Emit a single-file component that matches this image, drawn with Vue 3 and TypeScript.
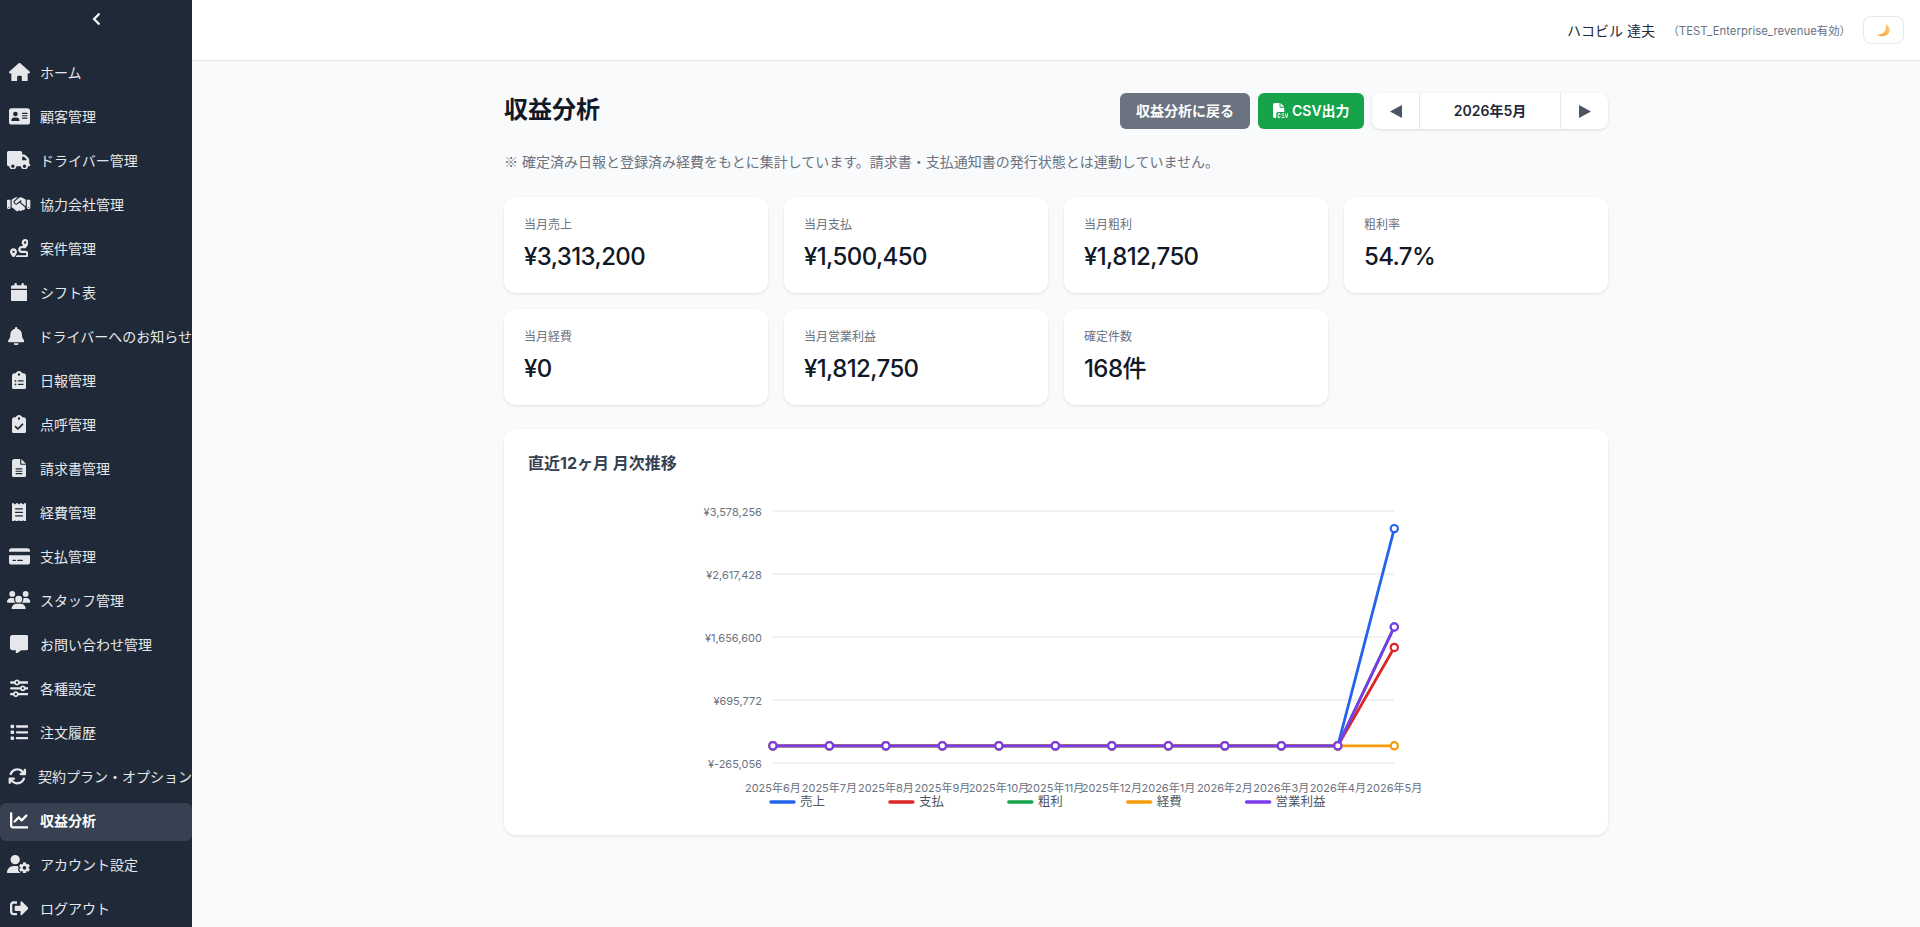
<script setup lang="ts">
import { computed } from 'vue'

interface NavItem {
  label: string
  w: number
  d: string
  active?: boolean
  tight?: boolean
}

const navItems: NavItem[] = [
  { label: 'ホーム', w: 576, d: 'M575.8 255.5c0 18-15 32.1-32 32.1h-32l.7 160.2c0 2.7-.2 5.4-.5 8.1V472c0 22.1-17.9 40-40 40H456c-1.1 0-2.2 0-3.3-.1c-1.4 .1-2.8 .1-4.2 .1H416 392c-22.1 0-40-17.9-40-40V448 384c0-17.7-14.3-32-32-32H256c-17.7 0-32 14.3-32 32v64 24c0 22.1-17.9 40-40 40H160 128.1c-1.5 0-3-.1-4.5-.2c-1.2 .1-2.4 .2-3.6 .2H104c-22.1 0-40-17.9-40-40V360c0-.9 0-1.9 .1-2.8V287.6H32c-18 0-32-14-32-32.1c0-9 3-17 10-24L266.4 8c7-7 15-8 22-8s15 2 21 7L564.8 231.5c8 7 12 15 11 24z' },
  { label: '顧客管理', w: 576, d: 'M64 32C28.7 32 0 60.7 0 96V416c0 35.3 28.7 64 64 64H512c35.3 0 64-28.7 64-64V96c0-35.3-28.7-64-64-64H64zm80 256h64c44.2 0 80 35.8 80 80c0 8.8-7.2 16-16 16H80c-8.8 0-16-7.2-16-16c0-44.2 35.8-80 80-80zm-32-96a64 64 0 1 1 128 0 64 64 0 1 1 -128 0zm256-32H496c8.8 0 16 7.2 16 16s-7.2 16-16 16H368c-8.8 0-16-7.2-16-16s7.2-16 16-16zm0 64H496c8.8 0 16 7.2 16 16s-7.2 16-16 16H368c-8.8 0-16-7.2-16-16s7.2-16 16-16zm0 64H496c8.8 0 16 7.2 16 16s-7.2 16-16 16H368c-8.8 0-16-7.2-16-16s7.2-16 16-16z' },
  { label: 'ドライバー管理', w: 640, d: 'M48 0C21.5 0 0 21.5 0 48V368c0 26.5 21.5 48 48 48H64c0 53 43 96 96 96s96-43 96-96H384c0 53 43 96 96 96s96-43 96-96h32c17.7 0 32-14.3 32-32s-14.3-32-32-32V288 256 237.3c0-17-6.7-33.3-18.7-45.3L512 114.7c-12-12-28.3-18.7-45.3-18.7H416V48c0-26.5-21.5-48-48-48H48zM416 160h50.7L544 237.3V256H416V160zM112 416a48 48 0 1 1 96 0 48 48 0 1 1 -96 0zm368-48a48 48 0 1 1 0 96 48 48 0 1 1 0-96z' },
  { label: '協力会社管理', w: 640, d: 'M323.4 85.2l-96.8 78.4c-16.1 13-19.2 36.4-7 53.1c12.9 17.8 38 21.3 55.3 7.8l99.3-77.2c7-5.4 17-4.2 22.5 2.8s4.2 17-2.8 22.5l-20.9 16.2L512 316.8V128h-.7l-3.9-2.5L434.8 79c-15.3-9.8-33.2-15-51.4-15c-21.8 0-43 7.5-60 21.2zm22.8 124.4l-51.7 40.2C263 274.4 217.3 268 193.7 235.6c-22.2-30.5-16.6-73.1 12.7-96.8l83.2-67.3c-11.6-4.9-24.1-7.4-36.8-7.4C234 64 215.7 69.6 200 80l-72 48V352h28.2l91.4 83.4c19.6 17.9 49.9 16.5 67.8-3.1c5.5-6.1 9.2-13.2 11.1-20.6l17 15.6c19.5 17.9 49.9 16.6 67.8-2.9c4.5-4.9 7.8-10.6 9.9-16.5c19.4 13 45.8 10.3 62.1-7.5c17.9-19.5 16.6-49.9-2.9-67.8l-134.2-123zM16 128c-8.8 0-16 7.2-16 16V352c0 17.7 14.3 32 32 32H64c17.7 0 32-14.3 32-32V128H16zM48 320a16 16 0 1 1 0 32 16 16 0 1 1 0-32zM544 128V352c0 17.7 14.3 32 32 32h32c17.7 0 32-14.3 32-32V144c0-8.8-7.2-16-16-16H544zm32 208a16 16 0 1 1 32 0 16 16 0 1 1 -32 0z' },
  { label: '案件管理', w: 512, d: 'M512 96c0 50.2-59.1 125.1-84.6 155c-3.8 4.4-9.4 6.1-14.5 5H320c-17.7 0-32 14.3-32 32s14.3 32 32 32h96c53 0 96 43 96 96s-43 96-96 96H139.6c8.7-9.9 19.3-22.6 30-36.8c6.3-8.4 12.8-17.6 19-27.2H416c17.7 0 32-14.3 32-32s-14.3-32-32-32H320c-53 0-96-43-96-96s43-96 96-96h39.8c-21-31.5-39.8-67.7-39.8-96c0-53 43-96 96-96s96 43 96 96zM117.1 489.1c-3.8 4.3-7.2 8.1-10.1 11.3l-1.8 2-.2-.2c-6 4.6-14.6 4-20-1.8C59.8 473 0 402.5 0 352c0-53 43-96 96-96s96 43 96 96c0 30-21.1 67-43.5 97.9c-10.7 14.7-21.7 28-30.8 38.5l-.6 .7zM128 352a32 32 0 1 0 -64 0 32 32 0 1 0 64 0zM416 128a32 32 0 1 0 0-64 32 32 0 1 0 0 64z' },
  { label: 'シフト表', w: 448, d: 'M96 32V64H48C21.5 64 0 85.5 0 112v48H448V112c0-26.5-21.5-48-48-48H352V32c0-17.7-14.3-32-32-32s-32 14.3-32 32V64H160V32c0-17.7-14.3-32-32-32S96 14.3 96 32zM448 192H0V464c0 26.5 21.5 48 48 48H400c26.5 0 48-21.5 48-48V192z' },
  { label: 'ドライバーへのお知らせ', w: 448, tight: true, d: 'M224 0c-17.7 0-32 14.3-32 32V51.2C119 66 64 130.6 64 208v18.8c0 47-17.3 92.4-48.5 127.6l-7.4 8.3c-8.4 9.4-10.4 22.9-5.3 34.4S19.4 416 32 416H416c12.6 0 24-7.4 29.2-18.9s3.1-25-5.3-34.4l-7.4-8.3C401.3 319.2 384 273.9 384 226.8V208c0-77.4-55-142-128-156.8V32c0-17.7-14.3-32-32-32zm45.3 493.3c12-12 18.7-28.3 18.7-45.3H224 160c0 17 6.7 33.3 18.7 45.3s28.3 18.7 45.3 18.7s33.3-6.7 45.3-18.7z' },
  { label: '日報管理', w: 384, d: 'M192 0c-41.8 0-77.4 26.7-90.5 64H64C28.7 64 0 92.7 0 128V448c0 35.3 28.7 64 64 64H320c35.3 0 64-28.7 64-64V128c0-35.3-28.7-64-64-64H282.5C269.4 26.7 233.8 0 192 0zm0 64a32 32 0 1 1 0 64 32 32 0 1 1 0-64zM72 272a24 24 0 1 1 48 0 24 24 0 1 1 -48 0zm104-16H304c8.8 0 16 7.2 16 16s-7.2 16-16 16H176c-8.8 0-16-7.2-16-16s7.2-16 16-16zM72 368a24 24 0 1 1 48 0 24 24 0 1 1 -48 0zm88 0c0-8.8 7.2-16 16-16H304c8.8 0 16 7.2 16 16s-7.2 16-16 16H176c-8.8 0-16-7.2-16-16z' },
  { label: '点呼管理', w: 384, d: 'M192 0c-41.8 0-77.4 26.7-90.5 64H64C28.7 64 0 92.7 0 128V448c0 35.3 28.7 64 64 64H320c35.3 0 64-28.7 64-64V128c0-35.3-28.7-64-64-64H282.5C269.4 26.7 233.8 0 192 0zm0 64a32 32 0 1 1 0 64 32 32 0 1 1 0-64zM305 273L177 401c-9.4 9.4-24.6 9.4-33.9 0L79 337c-9.4-9.4-9.4-24.6 0-33.9s24.6-9.4 33.9 0l47 47L271 239c9.4-9.4 24.6-9.4 33.9 0s9.4 24.6 0 33.9z' },
  { label: '請求書管理', w: 384, d: 'M64 0C28.7 0 0 28.7 0 64V448c0 35.3 28.7 64 64 64H320c35.3 0 64-28.7 64-64V160H256c-17.7 0-32-14.3-32-32V0H64zM256 0V128H384L256 0zM112 256H272c8.8 0 16 7.2 16 16s-7.2 16-16 16H112c-8.8 0-16-7.2-16-16s7.2-16 16-16zm0 64H272c8.8 0 16 7.2 16 16s-7.2 16-16 16H112c-8.8 0-16-7.2-16-16s7.2-16 16-16zm0 64H272c8.8 0 16 7.2 16 16s-7.2 16-16 16H112c-8.8 0-16-7.2-16-16s7.2-16 16-16z' },
  { label: '経費管理', w: 384, d: 'M14 2.2C22.5-1.7 32.5-.3 39.6 5.8L80 40.4 120.4 5.8c9-7.7 22.3-7.7 31.2 0L192 40.4 232.4 5.8c9-7.7 22.3-7.7 31.2 0L304 40.4 344.4 5.8c7.1-6.1 17.1-7.5 25.6-3.6s14 12.4 14 21.8V488c0 9.4-5.5 17.9-14 21.8s-18.5 2.5-25.6-3.6L304 471.6l-40.4 34.6c-9 7.7-22.3 7.7-31.2 0L192 471.6l-40.4 34.6c-9 7.7-22.3 7.7-31.2 0L80 471.6 39.6 506.2c-7.1 6.1-17.1 7.5-25.6 3.6S0 497.4 0 488V24C0 14.6 5.5 6.1 14 2.2zM96 144c-8.8 0-16 7.2-16 16s7.2 16 16 16H288c8.8 0 16-7.2 16-16s-7.2-16-16-16H96zM80 352c0 8.8 7.2 16 16 16H288c8.8 0 16-7.2 16-16s-7.2-16-16-16H96c-8.8 0-16 7.2-16 16zM96 240c-8.8 0-16 7.2-16 16s7.2 16 16 16H288c8.8 0 16-7.2 16-16s-7.2-16-16-16H96z' },
  { label: '支払管理', w: 576, d: 'M64 32C28.7 32 0 60.7 0 96v32H576V96c0-35.3-28.7-64-64-64H64zM576 224H0V416c0 35.3 28.7 64 64 64H512c35.3 0 64-28.7 64-64V224zM112 352h64c8.8 0 16 7.2 16 16s-7.2 16-16 16H112c-8.8 0-16-7.2-16-16s7.2-16 16-16zm112 16c0-8.8 7.2-16 16-16H368c8.8 0 16 7.2 16 16s-7.2 16-16 16H240c-8.8 0-16-7.2-16-16z' },
  { label: 'スタッフ管理', w: 640, d: 'M144 0a80 80 0 1 1 0 160A80 80 0 1 1 144 0zM512 0a80 80 0 1 1 0 160A80 80 0 1 1 512 0zM0 298.7C0 239.8 47.8 192 106.7 192h42.7c15.9 0 31 3.5 44.6 9.7c-1.3 7.2-1.9 14.7-1.9 22.3c0 38.2 16.8 72.5 43.3 96c-.2 0-.4 0-.7 0H21.3C9.6 320 0 310.4 0 298.7zM405.3 320c-.2 0-.4 0-.7 0c26.6-23.5 43.3-57.8 43.3-96c0-7.6-.7-15-1.9-22.3c13.6-6.3 28.7-9.7 44.6-9.7h42.7C592.2 192 640 239.8 640 298.7c0 11.8-9.6 21.3-21.3 21.3H405.3zM224 224a96 96 0 1 1 192 0 96 96 0 1 1 -192 0zM128 485.3C128 411.7 187.7 352 261.3 352H378.7C452.3 352 512 411.7 512 485.3c0 14.7-11.9 26.7-26.7 26.7H154.7c-14.7 0-26.7-11.9-26.7-26.7z' },
  { label: 'お問い合わせ管理', w: 512, d: 'M64 0C28.7 0 0 28.7 0 64V352c0 35.3 28.7 64 64 64h96v80c0 6.1 3.4 11.6 8.8 14.3s11.9 2.1 16.8-1.5L309.3 416H448c35.3 0 64-28.7 64-64V64c0-35.3-28.7-64-64-64H64z' },
  { label: '各種設定', w: 512, d: 'M0 416c0 17.7 14.3 32 32 32l54.7 0c12.3 28.3 40.5 48 73.3 48s61-19.7 73.3-48L480 448c17.7 0 32-14.3 32-32s-14.3-32-32-32l-246.7 0c-12.3-28.3-40.5-48-73.3-48s-61 19.7-73.3 48L32 384c-17.7 0-32 14.3-32 32zm128 0a32 32 0 1 1 64 0 32 32 0 1 1 -64 0zM320 256a32 32 0 1 1 64 0 32 32 0 1 1 -64 0zm32-80c-32.8 0-61 19.7-73.3 48L32 224c-17.7 0-32 14.3-32 32s14.3 32 32 32l246.7 0c12.3 28.3 40.5 48 73.3 48s61-19.7 73.3-48l54.7 0c17.7 0 32-14.3 32-32s-14.3-32-32-32l-54.7 0c-12.3-28.3-40.5-48-73.3-48zM192 128a32 32 0 1 1 0-64 32 32 0 1 1 0 64zm73.3-64C253 35.7 224.8 16 192 16s-61 19.7-73.3 48L32 64C14.3 64 0 78.3 0 96s14.3 32 32 32l86.7 0c12.3 28.3 40.5 48 73.3 48s61-19.7 73.3-48L480 128c17.7 0 32-14.3 32-32s-14.3-32-32-32L265.3 64z' },
  { label: '注文履歴', w: 512, d: 'M40 48C26.7 48 16 58.7 16 72v48c0 13.3 10.7 24 24 24H88c13.3 0 24-10.7 24-24V72c0-13.3-10.7-24-24-24H40zM192 64c-17.7 0-32 14.3-32 32s14.3 32 32 32H480c17.7 0 32-14.3 32-32s-14.3-32-32-32H192zm0 160c-17.7 0-32 14.3-32 32s14.3 32 32 32H480c17.7 0 32-14.3 32-32s-14.3-32-32-32H192zm0 160c-17.7 0-32 14.3-32 32s14.3 32 32 32H480c17.7 0 32-14.3 32-32s-14.3-32-32-32H192zM16 232v48c0 13.3 10.7 24 24 24H88c13.3 0 24-10.7 24-24V232c0-13.3-10.7-24-24-24H40c-13.3 0-24 10.7-24 24zM40 368c-13.3 0-24 10.7-24 24v48c0 13.3 10.7 24 24 24H88c13.3 0 24-10.7 24-24V392c0-13.3-10.7-24-24-24H40z' },
  { label: '契約プラン・オプション', w: 512, tight: true, d: 'M105.1 202.6c7.7-21.8 20.2-42.3 37.8-59.8c62.5-62.5 163.8-62.5 226.3 0L386.3 160H352c-17.7 0-32 14.3-32 32s14.3 32 32 32H463.5c0 0 0 0 0 0h.4c17.7 0 32-14.3 32-32V80c0-17.7-14.3-32-32-32s-32 14.3-32 32v35.2L414.4 97.6c-87.5-87.5-229.3-87.5-316.8 0C73.2 122 55.6 150.7 44.8 181.4c-5.9 16.7 2.9 34.9 19.5 40.8s34.9-2.9 40.8-19.5zM39 289.3c-5 1.5-9.8 4.2-13.7 8.2c-4 4-6.7 8.8-8.1 14c-.3 1.2-.6 2.5-.8 3.8c-.3 1.7-.4 3.4-.4 5.1V432c0 17.7 14.3 32 32 32s32-14.3 32-32V396.9l17.6 17.5 0 0c87.5 87.4 229.3 87.4 316.7 0c24.4-24.4 42.1-53.1 52.9-83.7c5.9-16.7-2.9-34.9-19.5-40.8s-34.9 2.9-40.8 19.5c-7.7 21.8-20.2 42.3-37.8 59.8c-62.5 62.5-163.8 62.5-226.3 0l-.1-.1L125.6 352H160c17.7 0 32-14.3 32-32s-14.3-32-32-32H48.4c-1.6 0-3.2 .1-4.8 .3s-3.1 .5-4.6 1z' },
  { label: '収益分析', w: 512, active: true, d: 'M64 64c0-17.7-14.3-32-32-32S0 46.3 0 64V400c0 44.2 35.8 80 80 80H480c17.7 0 32-14.3 32-32s-14.3-32-32-32H80c-8.8 0-16-7.2-16-16V64zm406.6 86.6c12.5-12.5 12.5-32.8 0-45.3s-32.8-12.5-45.3 0L320 210.7l-57.4-57.4c-12.5-12.5-32.8-12.5-45.3 0l-112 112c-12.5 12.5-12.5 32.8 0 45.3s32.8 12.5 45.3 0L240 221.3l57.4 57.4c12.5 12.5 32.8 12.5 45.3 0l128-128z' },
  { label: 'アカウント設定', w: 640, d: 'M224 0a128 128 0 1 1 0 256A128 128 0 1 1 224 0zM178.3 304h91.4c11.8 0 23.4 1.2 34.5 3.3c-2.1 18.5 7.4 35.6 21.8 44.8c-16.6 10.6-26.7 31.6-20 53.3c4 12.9 9.4 25.5 16.4 37.6s15.2 23.1 24.4 33c15.7 16.9 39.6 18.4 57.2 8.7v.9c0 9.2 2.7 18.5 7.9 26.3H29.7C13.3 512 0 498.7 0 482.3C0 383.8 79.8 304 178.3 304zM436 218.2c0-7 4.5-13.3 11.3-14.8c10.5-2.4 21.5-3.7 32.7-3.7s22.2 1.3 32.7 3.7c6.8 1.5 11.3 7.8 11.3 14.8v30.6c7.9 3.4 15.4 7.7 22.3 12.8l24.9-14.3c6.1-3.5 13.7-2.7 18.5 2.4c7.6 8.1 14.3 17.2 20.1 27.2s10.3 20.4 13.5 31c2.1 6.7-1.1 13.7-7.2 17.2l-25 14.4c.4 4 .7 8.1 .7 12.3s-.2 8.2-.7 12.3l25 14.4c6.1 3.5 9.2 10.5 7.2 17.2c-3.3 10.6-7.8 21-13.5 31s-12.5 19.1-20.1 27.2c-4.8 5.1-12.5 5.9-18.5 2.4l-24.9-14.3c-6.9 5.1-14.3 9.4-22.3 12.8l0 30.6c0 7-4.5 13.3-11.3 14.8c-10.5 2.4-21.5 3.7-32.7 3.7s-22.2-1.3-32.7-3.7c-6.8-1.5-11.3-7.8-11.3-14.8V454.8c-8-3.4-15.6-7.7-22.5-12.9l-24.7 14.3c-6.1 3.5-13.7 2.7-18.5-2.4c-7.6-8.1-14.3-17.2-20.1-27.2s-10.3-20.4-13.5-31c-2.1-6.7 1.1-13.7 7.2-17.2l24.8-14.3c-.4-4.1-.7-8.2-.7-12.4s.2-8.3 .7-12.4L343.8 325c-6.1-3.5-9.2-10.5-7.2-17.2c3.3-10.6 7.7-21 13.5-31s12.5-19.1 20.1-27.2c4.8-5.1 12.4-5.9 18.5-2.4l24.8 14.3c6.9-5.1 14.5-9.4 22.5-12.9V218.2zm92.1 133.5a48.1 48.1 0 1 0 -96.1 0 48.1 48.1 0 1 0 96.1 0z' },
  { label: 'ログアウト', w: 512, d: 'M497 273L329 441c-15 15-41 4.5-41-17v-96H152c-13.3 0-24-10.7-24-24v-96c0-13.3 10.7-24 24-24h136V88c0-21.4 25.9-32 41-17l168 168c9.3 9.4 9.3 24.6 0 34zM192 436v-40c0-6.6-5.4-12-12-12H96c-17.7 0-32-14.3-32-32V160c0-17.7 14.3-32 32-32h84c6.6 0 12-5.4 12-12V76c0-6.6-5.4-12-12-12H96c-53 0-96 43-96 96v192c0 53 43 96 96 96h84c6.6 0 12-5.4 12-12z' }
]

const stats = [
  { label: '当月売上', value: '¥3,313,200' },
  { label: '当月支払', value: '¥1,500,450' },
  { label: '当月粗利', value: '¥1,812,750' },
  { label: '粗利率', value: '54.7%' },
  { label: '当月経費', value: '¥0' },
  { label: '当月営業利益', value: '¥1,812,750' },
  { label: '確定件数', value: '168件' }
]

const months = [
  '2025年6月', '2025年7月', '2025年8月', '2025年9月', '2025年10月', '2025年11月',
  '2025年12月', '2026年1月', '2026年2月', '2026年3月', '2026年4月', '2026年5月'
]

// chart geometry, in svg units
const plotLeft = 244.9
const plotRight = 866.3
const plotTop = 11.2
const gridStep = 63
const axisMin = -265056
const axisStep = 960828

const stepX = (plotRight - plotLeft) / (months.length - 1)
const xAt = (i: number) => plotLeft + i * stepX
const yAt = (v: number) => plotTop + 4 * gridStep - ((v - axisMin) / axisStep) * gridStep

const ticks = [3578256, 2617428, 1656600, 695772, -265056]
const formatTick = (v: number) =>
  v < 0 ? '¥-' + Math.abs(v).toLocaleString('en-US') : '¥' + v.toLocaleString('en-US')

const withLast = (last: number) => months.map((_, i) => (i === months.length - 1 ? last : 0))

const series = computed(() =>
  [
    { name: '売上', color: '#2563eb', last: 3313200 },
    { name: '支払', color: '#dc2626', last: 1500450 },
    { name: '粗利', color: '#16a34a', last: 1812750 },
    { name: '経費', color: '#f59e0b', last: 0 },
    { name: '営業利益', color: '#7c3aed', last: 1812750 }
  ].map((s) => {
    const pts = withLast(s.last).map((v, i) => ({ x: xAt(i), y: yAt(v) }))
    return { ...s, pts, line: pts.map((p) => `${p.x},${p.y}`).join(' ') }
  })
)

const legendStep = 118.9
</script>

<template>
  <div class="layout">
    <aside class="sidebar">
      <div class="sidebar-toggle">
        <svg class="chevron" viewBox="0 0 320 512" fill="currentColor">
          <path d="M34.52 239.03L228.87 44.69c9.37-9.37 24.57-9.37 33.94 0l22.67 22.67c9.36 9.36 9.37 24.52.04 33.9L131.49 256l154.02 154.75c9.34 9.38 9.32 24.54-.04 33.9l-22.67 22.67c-9.37 9.37-24.57 9.37-33.94 0L34.52 272.97c-9.37-9.37-9.37-24.57 0-33.94z" />
        </svg>
      </div>
      <nav class="nav">
        <a
          v-for="item in navItems"
          :key="item.label"
          href="#"
          class="nav-link"
          :class="{ active: item.active, tight: item.tight }"
          @click.prevent
        >
          <span class="nav-icon">
            <svg :viewBox="`0 0 ${item.w} 512`" :width="(item.w / 512) * 18.67" height="18.67" fill="currentColor">
              <path :d="item.d" />
            </svg>
          </span>
          <span class="nav-text">{{ item.label }}</span>
        </a>
      </nav>
    </aside>

    <div class="main">
      <header class="topbar">
        <span class="user-name">ハコビル 達夫</span>
        <span class="plan">（TEST_Enterprise_revenue有効）</span>
        <button class="theme-btn" type="button">
          <svg viewBox="0 0 16 16" width="15" height="15">
            <defs>
              <linearGradient id="moon" x1="0" y1="1" x2="1" y2="0">
                <stop offset="0" stop-color="#f6a13c" />
                <stop offset="1" stop-color="#f8cf7e" />
              </linearGradient>
            </defs>
            <path d="M10.5 1C14.5 3.5 15.5 8 13.5 11C11.5 14.5 6 15.5 1 12.5C5 12.5 8 11 9.5 8.5C10.8 6.3 11 3.5 10.5 1Z" fill="url(#moon)" />
          </svg>
        </button>
      </header>

      <main class="content">
        <div class="page-head">
          <h1>収益分析</h1>
          <div class="actions">
            <button class="btn btn-gray" type="button">収益分析に戻る</button>
            <button class="btn btn-green" type="button">
              <svg viewBox="0 0 512 512" width="15" height="15" fill="currentColor">
                <path d="M0 64C0 28.7 28.7 0 64 0H224V128c0 17.7 14.3 32 32 32H384V304H176c-35.3 0-64 28.7-64 64V512H64c-35.3 0-64-28.7-64-64V64zm384 64H256V0L384 128zM200 352h16c22.1 0 40 17.9 40 40v8c0 8.8-7.2 16-16 16s-16-7.2-16-16v-8c0-4.4-3.6-8-8-8H200c-4.4 0-8 3.6-8 8v80c0 4.4 3.6 8 8 8h16c4.4 0 8-3.6 8-8v-8c0-8.8 7.2-16 16-16s16 7.2 16 16v8c0 22.1-17.9 40-40 40H200c-22.1 0-40-17.9-40-40V392c0-22.1 17.9-40 40-40zm133.1 0H368c8.8 0 16 7.2 16 16s-7.2 16-16 16H333.1c-7.2 0-13.1 5.9-13.1 13.1c0 5.2 3 9.9 7.8 12l37.4 16.6c16.3 7.2 26.8 23.4 26.8 41.2c0 24.9-20.2 45.1-45.1 45.1H304c-8.8 0-16-7.2-16-16s7.2-16 16-16h52.9c7.2 0 13.1-5.9 13.1-13.1c0-5.2-3-9.9-7.8-12l-37.4-16.6c-16.3-7.2-26.8-23.4-26.8-41.2c0-24.9 20.2-45.1 45.1-45.1zm98.9 0c8.8 0 16 7.2 16 16v31.6c0 23 5.5 45.6 16 66c10.5-20.3 16-42.9 16-66V368c0-8.8 7.2-16 16-16s16 7.2 16 16v31.6c0 34.7-10.3 68.7-29.6 97.6l-5.1 7.7c-3 4.5-8 7.1-13.3 7.1s-10.3-2.7-13.3-7.1l-5.1-7.7c-19.3-28.9-29.6-62.9-29.6-97.6V368c0-8.8 7.2-16 16-16z" />
              </svg>
              CSV出力
            </button>
            <div class="month-nav">
              <button class="month-arrow" type="button" aria-label="前月">
                <svg viewBox="0 0 12 13" width="12" height="13" fill="currentColor"><polygon points="12,0 12,13 0,6.5" /></svg>
              </button>
              <span class="month-label">2026年5月</span>
              <button class="month-arrow" type="button" aria-label="翌月">
                <svg viewBox="0 0 12 13" width="12" height="13" fill="currentColor"><polygon points="0,0 12,6.5 0,13" /></svg>
              </button>
            </div>
          </div>
        </div>

        <p class="note"><span class="cjk">※</span> 確定済み日報と登録済み経費をもとに集計しています。請求書・支払通知書の発行状態とは連動していません。</p>

        <div class="stats-grid">
          <div v-for="s in stats" :key="s.label" class="stat-card">
            <div class="stat-label">{{ s.label }}</div>
            <div class="stat-value">{{ s.value }}</div>
          </div>
        </div>

        <section class="chart-card">
          <h2>直近12ヶ月 月次推移</h2>
          <svg class="chart" viewBox="0 0 1056 311" width="1056" height="311">
            <g v-for="(t, i) in ticks" :key="t">
              <line :x1="plotLeft" :x2="plotRight" :y1="plotTop + i * gridStep" :y2="plotTop + i * gridStep" class="grid" />
              <text :x="plotLeft - 11" :y="plotTop + i * gridStep + 5" class="tick" text-anchor="end">{{ formatTick(t) }}</text>
            </g>
            <text v-for="(m, i) in months" :key="m" :x="xAt(i)" y="292" class="month-tick" text-anchor="middle">{{ m }}</text>

            <g v-for="s in series" :key="s.name">
              <polyline :points="s.line" fill="none" :stroke="s.color" stroke-width="2.8" stroke-linejoin="round" />
              <circle
                v-for="(p, i) in s.pts"
                :key="i"
                :cx="p.x"
                :cy="p.y"
                r="3.6"
                fill="#fff"
                :stroke="s.color"
                stroke-width="2.2"
              />
            </g>

            <g v-for="(s, i) in series" :key="'legend-' + s.name">
              <line :x1="243 + i * legendStep" :x2="266 + i * legendStep" y1="302" y2="302" :stroke="s.color" stroke-width="3.4" stroke-linecap="round" />
              <text :x="272 + i * legendStep" y="306" class="legend">{{ s.name }}</text>
            </g>
          </svg>
        </section>
      </main>
    </div>
  </div>
</template>

<style>
html,
body {
  margin: 0;
  background: #f9fafb;
}
</style>

<style scoped>
.layout {
  display: flex;
  height: 927px;
  overflow: hidden;
  font-family: Inter, "Noto Sans CJK JP", sans-serif;
}

.sidebar {
  width: 192px;
  flex-shrink: 0;
  background: #1f2937;
  color: #e5e7eb;
  overflow: hidden;
}

.sidebar-toggle {
  height: 38px;
  margin-bottom: 17px;
  display: flex;
  justify-content: center;
  align-items: center;
  color: #fff;
}

.chevron {
  height: 14px;
}

.nav {
  display: flex;
  flex-direction: column;
  gap: 6px;
}

.nav-link {
  display: flex;
  align-items: center;
  box-sizing: border-box;
  height: 38px;
  flex-shrink: 0;
  padding: 0 0 4px 8px;
  border-radius: 6px;
  color: #e5e7eb;
  text-decoration: none;
  font-size: 14px;
}

.nav-link.active {
  background: #374151;
  color: #fff;
  font-weight: 700;
}

.nav-icon {
  width: 22px;
  min-width: 0;
  margin-right: 10px;
  display: flex;
  justify-content: center;
  flex-shrink: 1;
}

.nav-link.tight .nav-icon {
  justify-content: flex-start;
}

.nav-icon svg {
  flex-shrink: 0;
}

.nav-text {
  white-space: nowrap;
  flex-shrink: 0;
}

.main {
  flex: 1;
  min-width: 0;
  background: #f9fafb;
}

.topbar {
  height: 60px;
  background: #fff;
  border-bottom: 1px solid #e5e7eb;
  display: flex;
  align-items: center;
  justify-content: flex-end;
  padding-right: 16px;
}

.user-name {
  font-size: 14px;
  color: #1f2937;
  margin-right: 12.5px;
}

.plan {
  font-size: 11.4px;
  color: #6b7280;
  margin-right: 12px;
}

.theme-btn {
  width: 41px;
  height: 28px;
  padding: 0;
  background: #fff;
  border: 1px solid #e5e7eb;
  border-radius: 8px;
  display: flex;
  align-items: center;
  justify-content: center;
}

.content {
  max-width: 1104px;
  margin: 0 auto;
  padding-top: 32px;
}

.page-head {
  display: flex;
  align-items: center;
  justify-content: space-between;
  height: 36px;
  margin-bottom: 24px;
}

.page-head h1 {
  margin: 0 0 3px;
  font-size: 24px;
  line-height: 32px;
  font-weight: 700;
  color: #111827;
}

.actions {
  display: flex;
  gap: 8px;
}

.btn {
  box-sizing: border-box;
  height: 36px;
  padding: 0 16px 2px;
  border: none;
  border-radius: 6px;
  color: #fff;
  font-family: inherit;
  font-size: 14px;
  font-weight: 600;
  display: flex;
  align-items: center;
  gap: 4px;
}

.btn-gray {
  background: #6b7280;
}

.btn-green {
  width: 106px;
  padding: 0 0 2px 15px;
  background: #16a34a;
}

.month-nav {
  display: flex;
  align-items: stretch;
  height: 36px;
  width: 236px;
  background: #fff;
  border-radius: 8px;
  box-shadow: 0 1px 3px rgba(0, 0, 0, 0.12);
}

.month-arrow {
  width: 47px;
  padding: 0;
  background: none;
  border: none;
  color: #4b5563;
  display: flex;
  align-items: center;
  justify-content: center;
}

.month-label {
  flex: 1;
  display: flex;
  align-items: center;
  justify-content: center;
  padding-bottom: 2px;
  border-left: 1px solid #e5e7eb;
  border-right: 1px solid #e5e7eb;
  font-size: 14px;
  font-weight: 600;
  color: #1f2937;
}

.note {
  height: 20px;
  margin: -2px 0 26px;
  font-size: 14px;
  line-height: 20px;
  color: #6b7280;
}

.cjk {
  font-family: "Noto Sans CJK JP", sans-serif;
}

.stats-grid {
  display: grid;
  grid-template-columns: repeat(4, 1fr);
  gap: 16px;
  margin-bottom: 24px;
}

.stat-card {
  height: 96px;
  box-sizing: border-box;
  padding: 21px 20px 19px;
  background: #fff;
  border-radius: 12px;
  box-shadow: 0 1px 3px rgba(0, 0, 0, 0.1);
}

.stat-label {
  font-size: 12px;
  line-height: 14px;
  color: #6b7280;
  margin-bottom: 8px;
}

.stat-value {
  font-size: 24px;
  line-height: 34px;
  font-weight: 500;
  letter-spacing: -0.025em;
  color: #111827;
}

.chart-card {
  padding: 24px;
  background: #fff;
  border-radius: 12px;
  box-shadow: 0 1px 3px rgba(0, 0, 0, 0.1);
}

.chart-card h2 {
  margin: 0 0 27px;
  font-size: 16px;
  line-height: 20px;
  font-weight: 700;
  color: #374151;
}

.chart {
  display: block;
}

.grid {
  stroke: #e8e8e8;
  stroke-width: 1.2;
}

.tick {
  font-size: 11px;
  fill: #6b7280;
}

.month-tick {
  font-size: 11px;
  fill: #6b7280;
}

.legend {
  font-size: 12.5px;
  fill: #4b5563;
}
</style>
